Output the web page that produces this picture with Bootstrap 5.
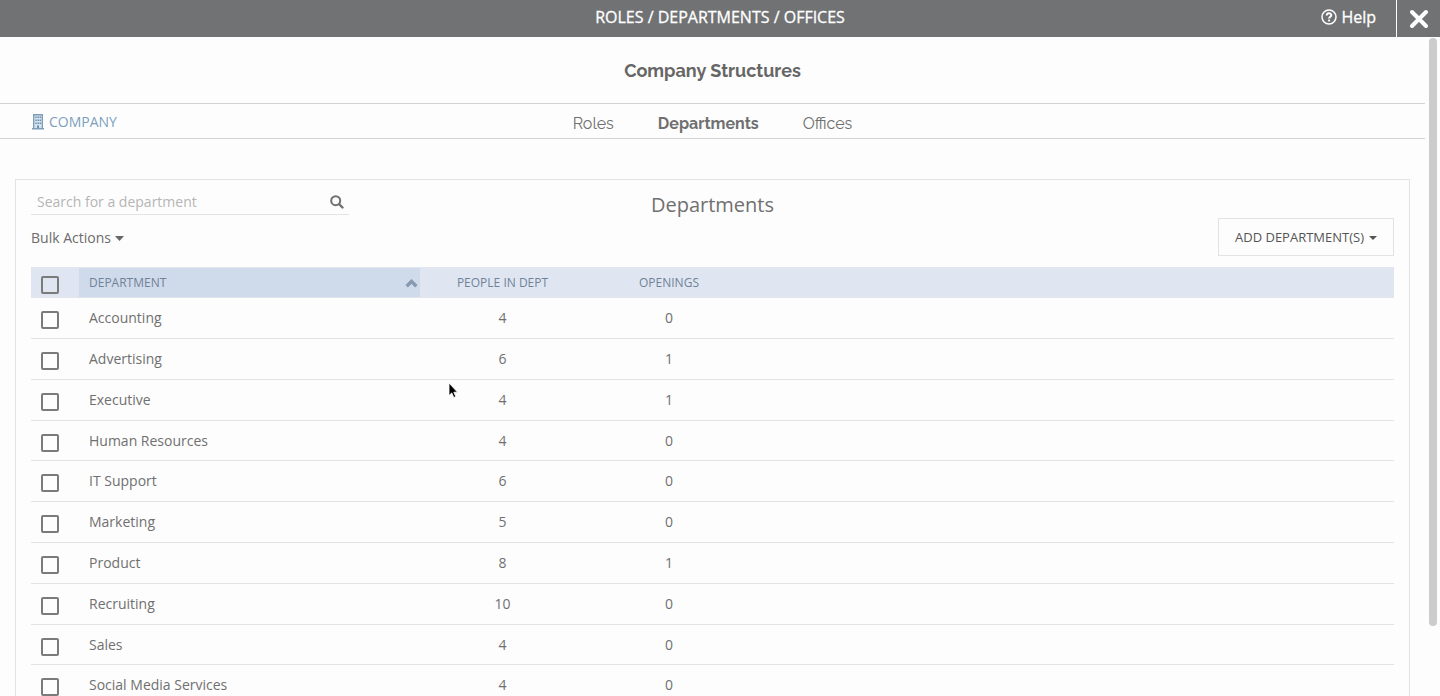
<!DOCTYPE html>
<html lang="en">
<head>
<meta charset="utf-8">
<meta name="viewport" content="width=device-width, initial-scale=1">
<title>Roles / Departments / Offices</title>
<link href="https://cdn.jsdelivr.net/npm/bootstrap@5.3.0/dist/css/bootstrap.min.css" rel="stylesheet">
<style>
  body { font-family: "Open Sans", sans-serif; font-size: 14px; line-height: 20px; color: #707070; background: #fdfdfd; }
  a { color: inherit; text-decoration: none; }
  svg { display: block; flex: none; }

  .topbar { display: grid; grid-template-columns: 1fr auto 1fr; height: 37px; background: #717274; color: #fff; flex: none; -webkit-text-stroke: .3px #fff; }
  .topbar h1 { font-size: 16px; line-height: 24px; margin: 0; padding-top: 5px; font-weight: 400; }
  .help-link { font-size: 16px; line-height: 24px; padding: 5px 20px 0 0; gap: 4px; }
  .close-btn { width: 44px; border: 0; border-left: 1px solid #fff; background: none; padding: 0; }

  .heading-font { font-family: Raleway, Lato, sans-serif; }
  .page-title { font-size: 18px; line-height: 24px; font-weight: 700; color: #666; padding: 22px 0 20px; margin: 0; }
  .tabs-row { border-top: 1px solid #d2d3d5; border-bottom: 1px solid #d2d3d5; height: 36px; padding: 0 31px; display: grid; grid-template-columns: 1fr auto 1fr; }
  .company { color: #7d9fbe; padding-top: 8px; gap: 4px; }
  .tabs-row nav { gap: 44px; font-size: 16px; padding-top: 10px; }

  .panel { margin: 40px 15px 0; padding: 0 15px; border: 1px solid #e2e3e4; }
  .tools { display: grid; grid-template-columns: 1fr auto 1fr; height: 87px; }
  .search { width: 318px; height: 35px; border-bottom: 1px solid #e2e3e4; padding: 9px 5px 0 6px; align-items: center; }
  .search input { border: 0; background: none; outline: 0; padding: 0; min-width: 0; color: inherit; }
  .search input::placeholder { color: #b5b5b5; opacity: 1; }
  .bulk { border: 0; background: none; padding: 0; margin-top: 13px; color: #6c6c6c; gap: 4px; }
  .panel-title { font-size: 20px; line-height: 28px; font-weight: 400; margin: 0; padding-top: 11px; }
  .add-btn { border: 1px solid #e2e3e4; background: #fdfdfd; height: 38px; padding: 0 16px; font-size: 13px; color: #555; gap: 5px; margin-top: 38px; }

  .dept-table { width: 100%; table-layout: fixed; }
  .dept-table th { height: 30px; padding: 0; font-size: 12px; line-height: 18px; font-weight: 400; color: #6f8298; background: #dfe6f2; border-top: 1px solid #e1e5ec; border-bottom: 1px solid #e1e5ec; vertical-align: middle; }
  .dept-table th.sorted { background: #cfdaea; padding: 0 2px 0 10px; }
  .dept-table td { height: 41px; padding: 0; border-bottom: 1px solid #e2e3e4; vertical-align: middle; }
  .dept-table tr:nth-child(5n+4) td { height: 40px; }
  .dept-table td.dept-name { padding-left: 10px; }
  .c-check { width: 48px; } .c-name { width: 341px; } .c-people { width: 165px; } .c-open { width: 168px; }
  .tick { appearance: none; display: block; width: 18px; height: 18px; border: 2px solid #7b7b7b; border-radius: 2px; margin: 4px 0 0 10px; }
  .tick:checked { background: #7b7b7b; }

  .rail { width: 15px; flex: none; padding: 1px 3px 0 4px; }
  .thumb { height: 588px; border-radius: 4px; background: #ccc; }
  .pointer { position: fixed; left: 448px; top: 382px; z-index: 10; }
</style>
</head>
<body>
<div class="vh-100 d-flex flex-column overflow-hidden">
  <header class="topbar">
    <span></span>
    <h1>ROLES / DEPARTMENTS / OFFICES</h1>
    <div class="d-flex justify-content-end">
      <a href="#" class="help-link d-flex">
        <svg width="16" height="24" viewBox="0 0 16 24" fill="none" stroke="#fff"><circle cx="8" cy="12" r="7" stroke-width="1.5"/><path d="M5.700 10.500C5.800 7.600 10.400 7.700 10.300 10.300C10.200 11.800 8.100 11.800 8.100 13.600" stroke-width="2"/><path d="M8.100 14.600v1.800" stroke-width="2"/></svg>
        Help</a>
      <button class="close-btn d-flex align-items-center justify-content-center" type="button" aria-label="Close">
        <svg width="20" height="20" viewBox="0 0 20 20" stroke="#fff" stroke-width="4" stroke-linecap="round"><path d="M3 3l14 14M17 3L3 17"/></svg>
      </button>
    </div>
  </header>

  <div class="d-flex flex-grow-1 overflow-hidden">
    <main class="flex-grow-1">
      <h2 class="page-title heading-font text-center">Company Structures</h2>
      <div class="tabs-row">
        <a href="#" class="company d-flex">
          <svg width="14" height="20" viewBox="0 0 14 20"><path d="M2 2h10v14h1v1.500H1V16h1z" fill="#7f9db8"/><path d="M3.300 3.500h7.400V16H3.300z" fill="#d3e3f0"/><path d="M4.200 4.500h1.500V6H4.200zM6.500 4.500H8V6H6.500zM8.600 4.500h1.500V6H8.600zM4.200 7.500h1.500V9H4.200zM6.500 7.500H8V9H6.500zM8.600 7.500h1.500V9H8.600zM4.200 10.500h1.500V12H4.200zM6.500 10.500H8V12H6.500zM8.600 10.500h1.500V12H8.600zM6 13.500h2V16H6z" fill="#7390ab"/></svg>
          COMPANY</a>
        <nav class="d-flex heading-font">
          <a href="#">Roles</a>
          <a href="#" class="fw-bold" aria-current="page">Departments</a>
          <a href="#">Offices</a>
        </nav>
        <span></span>
      </div>

      <section class="panel">
        <div class="tools">
          <div>
            <label class="search d-flex">
              <input class="flex-grow-1" type="text" placeholder="Search for a department" aria-label="Search for a department">
              <svg width="14" height="14" viewBox="0 0 14 14" fill="none" stroke="#707070" stroke-width="2"><circle cx="5.700" cy="5.700" r="4.500"/><path d="M9 9l3.500 3.500" stroke-width="2.400" stroke-linecap="round"/></svg>
            </label>
            <button class="bulk d-flex align-items-center" type="button">Bulk Actions
              <svg width="9" height="5" viewBox="0 0 9 5"><path d="M0 0h9L4.500 5z" fill="#666"/></svg></button>
          </div>
          <h3 class="panel-title">Departments</h3>
          <div class="d-flex justify-content-end align-items-start">
            <button class="add-btn d-flex align-items-center" type="button">ADD DEPARTMENT(S)
              <svg width="8" height="8" viewBox="0 0 8 8"><path d="M0 3h8L4 7z" fill="#555"/></svg></button>
          </div>
        </div>

        <table class="dept-table">
          <colgroup><col class="c-check"><col class="c-name"><col class="c-people"><col class="c-open"><col></colgroup>
          <thead>
            <tr>
              <th><input class="tick" type="checkbox" aria-label="Select all departments"></th>
              <th class="sorted"><div class="d-flex justify-content-between align-items-center">DEPARTMENT
                <svg width="13" height="10" viewBox="0 0 13 10" fill="none" stroke="#8699b0" stroke-width="3.400"><path d="M1.700 8.200L6.500 3.400l4.800 4.800"/></svg></div></th>
              <th class="text-center">PEOPLE IN DEPT</th>
              <th class="text-center">OPENINGS</th>
              <th></th>
            </tr>
          </thead>
          <tbody>
            <tr><td><input class="tick" type="checkbox" aria-label="Accounting"></td><td class="dept-name">Accounting</td><td class="text-center">4</td><td class="text-center">0</td><td></td></tr>
            <tr><td><input class="tick" type="checkbox" aria-label="Advertising"></td><td class="dept-name">Advertising</td><td class="text-center">6</td><td class="text-center">1</td><td></td></tr>
            <tr><td><input class="tick" type="checkbox" aria-label="Executive"></td><td class="dept-name">Executive</td><td class="text-center">4</td><td class="text-center">1</td><td></td></tr>
            <tr><td><input class="tick" type="checkbox" aria-label="Human Resources"></td><td class="dept-name">Human Resources</td><td class="text-center">4</td><td class="text-center">0</td><td></td></tr>
            <tr><td><input class="tick" type="checkbox" aria-label="IT Support"></td><td class="dept-name">IT Support</td><td class="text-center">6</td><td class="text-center">0</td><td></td></tr>
            <tr><td><input class="tick" type="checkbox" aria-label="Marketing"></td><td class="dept-name">Marketing</td><td class="text-center">5</td><td class="text-center">0</td><td></td></tr>
            <tr><td><input class="tick" type="checkbox" aria-label="Product"></td><td class="dept-name">Product</td><td class="text-center">8</td><td class="text-center">1</td><td></td></tr>
            <tr><td><input class="tick" type="checkbox" aria-label="Recruiting"></td><td class="dept-name">Recruiting</td><td class="text-center">10</td><td class="text-center">0</td><td></td></tr>
            <tr><td><input class="tick" type="checkbox" aria-label="Sales"></td><td class="dept-name">Sales</td><td class="text-center">4</td><td class="text-center">0</td><td></td></tr>
            <tr><td><input class="tick" type="checkbox" aria-label="Social Media Services"></td><td class="dept-name">Social Media Services</td><td class="text-center">4</td><td class="text-center">0</td><td></td></tr>
          </tbody>
        </table>
      </section>
    </main>
    <div class="rail" aria-hidden="true"><div class="thumb"></div></div>
  </div>
</div>
<svg class="pointer" width="12" height="18" viewBox="0 0 12 18" aria-hidden="true"><path d="M1 1v12.500l2.800-2.600 2 4.600 2-.9-2-4.400h3.700z" fill="#000" stroke="#fff" stroke-width=".8"/></svg>
<script src="https://cdn.jsdelivr.net/npm/bootstrap@5.3.0/dist/js/bootstrap.bundle.min.js"></script>
</body>
</html>
